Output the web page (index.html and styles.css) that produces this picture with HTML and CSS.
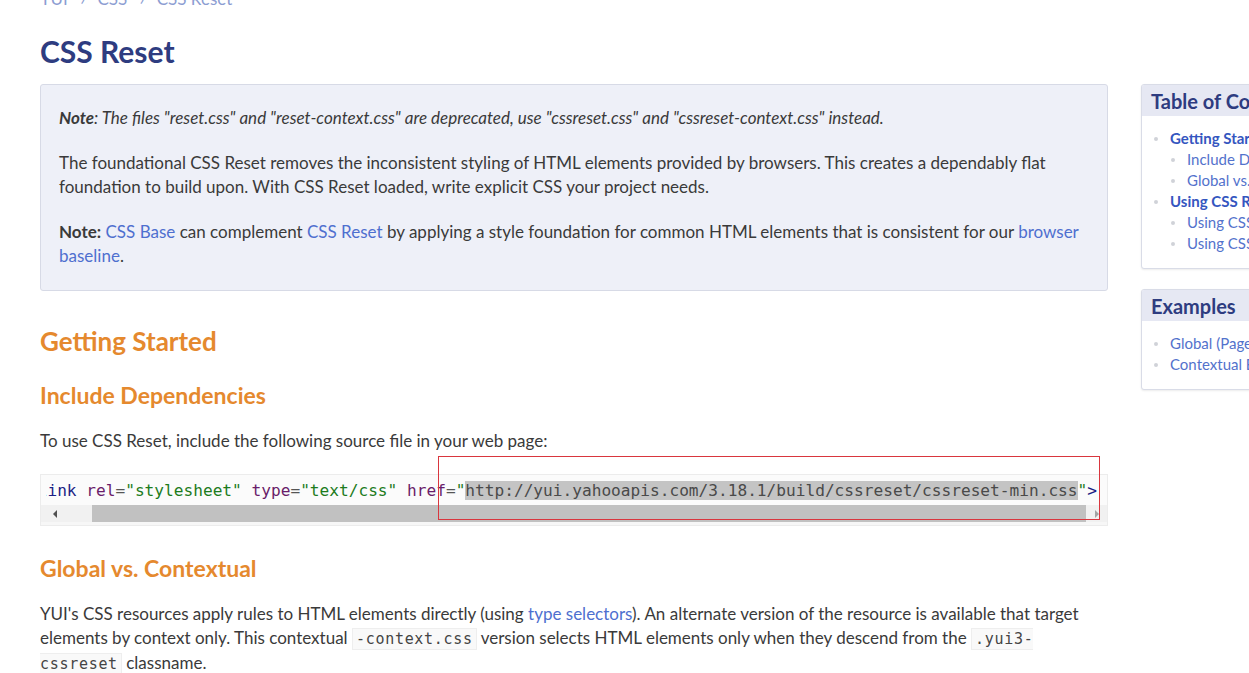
FILE: index.html
```html
<!DOCTYPE html>
<html lang="en">
<head>
<meta charset="utf-8">
<title>CSS Reset - YUI Library</title>
<link rel="stylesheet" href="styles.css">
</head>
<body>
<div class="page">
  <main class="main">
    <div class="crumbs"><a href="#">YUI</a> <span class="sep">›</span> <a href="#">CSS</a> <span class="sep">›</span> <span class="cur">CSS Reset</span></div>
    <h1 class="title">CSS Reset</h1>

    <div class="intro">
      <p class="deprecated"><strong>Note</strong>: The files "reset.css" and "reset-context.css" are deprecated, use "cssreset.css" and "cssreset-context.css" instead.</p>
      <p>The foundational CSS Reset removes the inconsistent styling of HTML elements provided by browsers. This creates a dependably flat foundation to build upon. With CSS Reset loaded, write explicit CSS your project needs.</p>
      <p><strong>Note:</strong> <a href="#">CSS Base</a> can complement <a href="#">CSS Reset</a> by applying a style foundation for common HTML elements that is consistent for our <a class="strong-link" href="#">browser baseline</a>.</p>
    </div>

    <h2 class="h2">Getting Started</h2>
    <h3 class="h3">Include Dependencies</h3>
    <p class="text">To use CSS Reset, include the following source file in your web page:</p>

    <div class="code">
      <div class="code-view">
        <pre class="code-line"><span class="tag">&lt;link</span> <span class="atn">rel</span><span class="pun">=</span><span class="atv">"stylesheet"</span> <span class="atn">type</span><span class="pun">=</span><span class="atv">"text/css"</span> <span class="atn">href</span><span class="pun">=</span><span class="atv">"</span><span class="sel">http://yui.yahooapis.com/3.18.1/build/cssreset/cssreset-min.css</span><span class="atv">"</span><span class="tag">&gt;</span></pre>
      </div>
      <div class="scrollbar">
        <span class="arrow arrow-left"></span>
        <span class="thumb"></span>
        <span class="arrow arrow-right"></span>
      </div>
      <div class="mark"></div>
    </div>

    <h3 class="h3 h3-second">Global vs. Contextual</h3>
    <p class="text">YUI's CSS resources apply rules to HTML elements directly (using <a href="#">type selectors</a>). An alternate version of the resource is available that target elements by context only. This contextual <code class="inline">-context.css</code> version selects HTML elements only when they descend from the <code class="inline">.yui3-cssreset</code> classname.</p>
  </main>

  <aside class="side">
    <section class="panel">
      <h2 class="panel-head">Table of Contents</h2>
      <ul class="toc">
        <li class="top"><a href="#">Getting Started</a>
          <ul class="sub">
            <li><a href="#">Include Dependencies</a></li>
            <li><a href="#">Global vs. Contextual</a></li>
          </ul>
        </li>
        <li class="top"><a href="#">Using CSS Reset</a>
          <ul class="sub">
            <li><a href="#">Using CSS Reset: Global</a></li>
            <li><a href="#">Using CSS Reset: Contextual</a></li>
          </ul>
        </li>
      </ul>
    </section>
    <section class="panel">
      <h2 class="panel-head">Examples</h2>
      <ul class="toc">
        <li class="plain"><a href="#">Global (Page-Level) Reset</a></li>
        <li class="plain"><a href="#">Contextual Element Reset</a></li>
      </ul>
    </section>
  </aside>
</div>
</body>
</html>
```
FILE: styles.css
```css
html, body {
  margin: 0;
  padding: 0;
  background: #fff;
  overflow: hidden;
}
body {
  font-family: Lato, "Liberation Sans", sans-serif;
  font-size: 17px;
  line-height: 24px;
  color: #3a3a3a;
}
a {
  color: #4e6fcf;
  text-decoration: none;
}
.page {
  display: flex;
  align-items: flex-start;
  gap: 33px;
  padding-left: 40px;
  width: 1500px;
}
.main {
  width: 1068px;
  flex: none;
}
.crumbs {
  margin-top: -13px;
  color: #8c9dd2;
}
.crumbs a, .crumbs .cur { color: #8c9dd2; }
.crumbs .sep { padding: 0 8px; }
.title {
  margin: 20px 0 13px;
  font-size: 30px;
  line-height: 40px;
  font-weight: bold;
  color: #2e3c80;
}
.intro {
  background: #eef0f8;
  border: 1px solid #d7dae6;
  border-radius: 3px;
  padding: 21px 18px 22px;
}
.intro p { margin: 0 0 21px; }
.intro p:last-child { margin-bottom: 0; }
.deprecated { font-style: italic; }
.deprecated strong { font-weight: bold; }
.h2 {
  margin: 33px 0 0;
  font-size: 26px;
  line-height: 34px;
  font-weight: bold;
  color: #e5892e;
}
.h3 {
  margin: 22px 0 0;
  font-size: 23px;
  line-height: 30px;
  font-weight: bold;
  color: #e5892e;
}
.h3-second { margin-top: 27px; }
.text { margin: 19px 0 0; }
.code {
  position: relative;
  margin-top: 21px;
  background: #f7f7f7;
  border: 1px solid #ececec;
}
.code-view {
  overflow: hidden;
  background: #fbfbfb;
  padding: 4px 0 2px 5px;
}
.code-line {
  overflow: hidden;
  margin: 0;
  text-indent: -18px;
  font-family: "DejaVu Sans Mono", monospace;
  font-size: 16.15px;
  line-height: 24px;
  white-space: pre;
  color: #333;
}
.tag { color: #1b1f85; }
.atn { color: #6a1d6a; }
.pun { color: #555; }
.atv { color: #1d7b1d; }
.sel { background: #c4c4c4; color: #4a4a4a; }
.scrollbar {
  display: flex;
  align-items: center;
  height: 17px;
  background: #f1f1f1;
  margin-bottom: 3px;
}
.arrow {
  width: 0;
  height: 0;
  border-top: 4px solid transparent;
  border-bottom: 4px solid transparent;
}
.arrow-left {
  margin-left: 12px;
  border-right: 4px solid #505050;
}
.thumb {
  margin-left: 35px;
  width: 994px;
  height: 17px;
  background: #c1c1c1;
}
.arrow-right {
  margin-left: 9px;
  border-left: 4px solid #a3a3a3;
}
.mark {
  position: absolute;
  left: 397px;
  top: -19px;
  width: 660px;
  height: 62px;
  border: 1px solid #d9363e;
  pointer-events: none;
}
code.inline {
  font-family: "DejaVu Sans Mono", monospace;
  font-size: 15px;
  letter-spacing: 0.7px;
  background: #f9f9f9;
  border: 1px solid #eeeeee;
  padding: 1px 3px;
  color: #444;
}

.side {
  flex: none;
  width: 260px;
  margin-top: 84px;
  display: flex;
  flex-direction: column;
  gap: 20px;
}
.panel {
  background: #fff;
  border: 1px solid #d9dce7;
  border-radius: 3px;
  box-shadow: 0 1px 2px rgba(0,0,0,0.08);
  white-space: nowrap;
  overflow: hidden;
}
.panel-head {
  margin: 0;
  background: #e6e8f3;
  padding: 3px 9px 2px;
  font-size: 20px;
  line-height: 26px;
  font-weight: bold;
  color: #2e3c80;
}
.toc {
  margin: 0;
  padding: 12px 0 14px 28px;
  list-style: none;
  font-size: 15px;
  line-height: 21px;
}
.toc li { position: relative; }
.toc li::before {
  content: "";
  position: absolute;
  left: -16px;
  top: 9px;
  width: 4px;
  height: 4px;
  border-radius: 50%;
  background: #d0d2d8;
}
.toc .top > a { font-weight: bold; color: #3456c0; }
.sub {
  margin: 0;
  padding: 0 0 0 17px;
  list-style: none;
}
.sub a, .plain a { color: #5372cc; }
```
